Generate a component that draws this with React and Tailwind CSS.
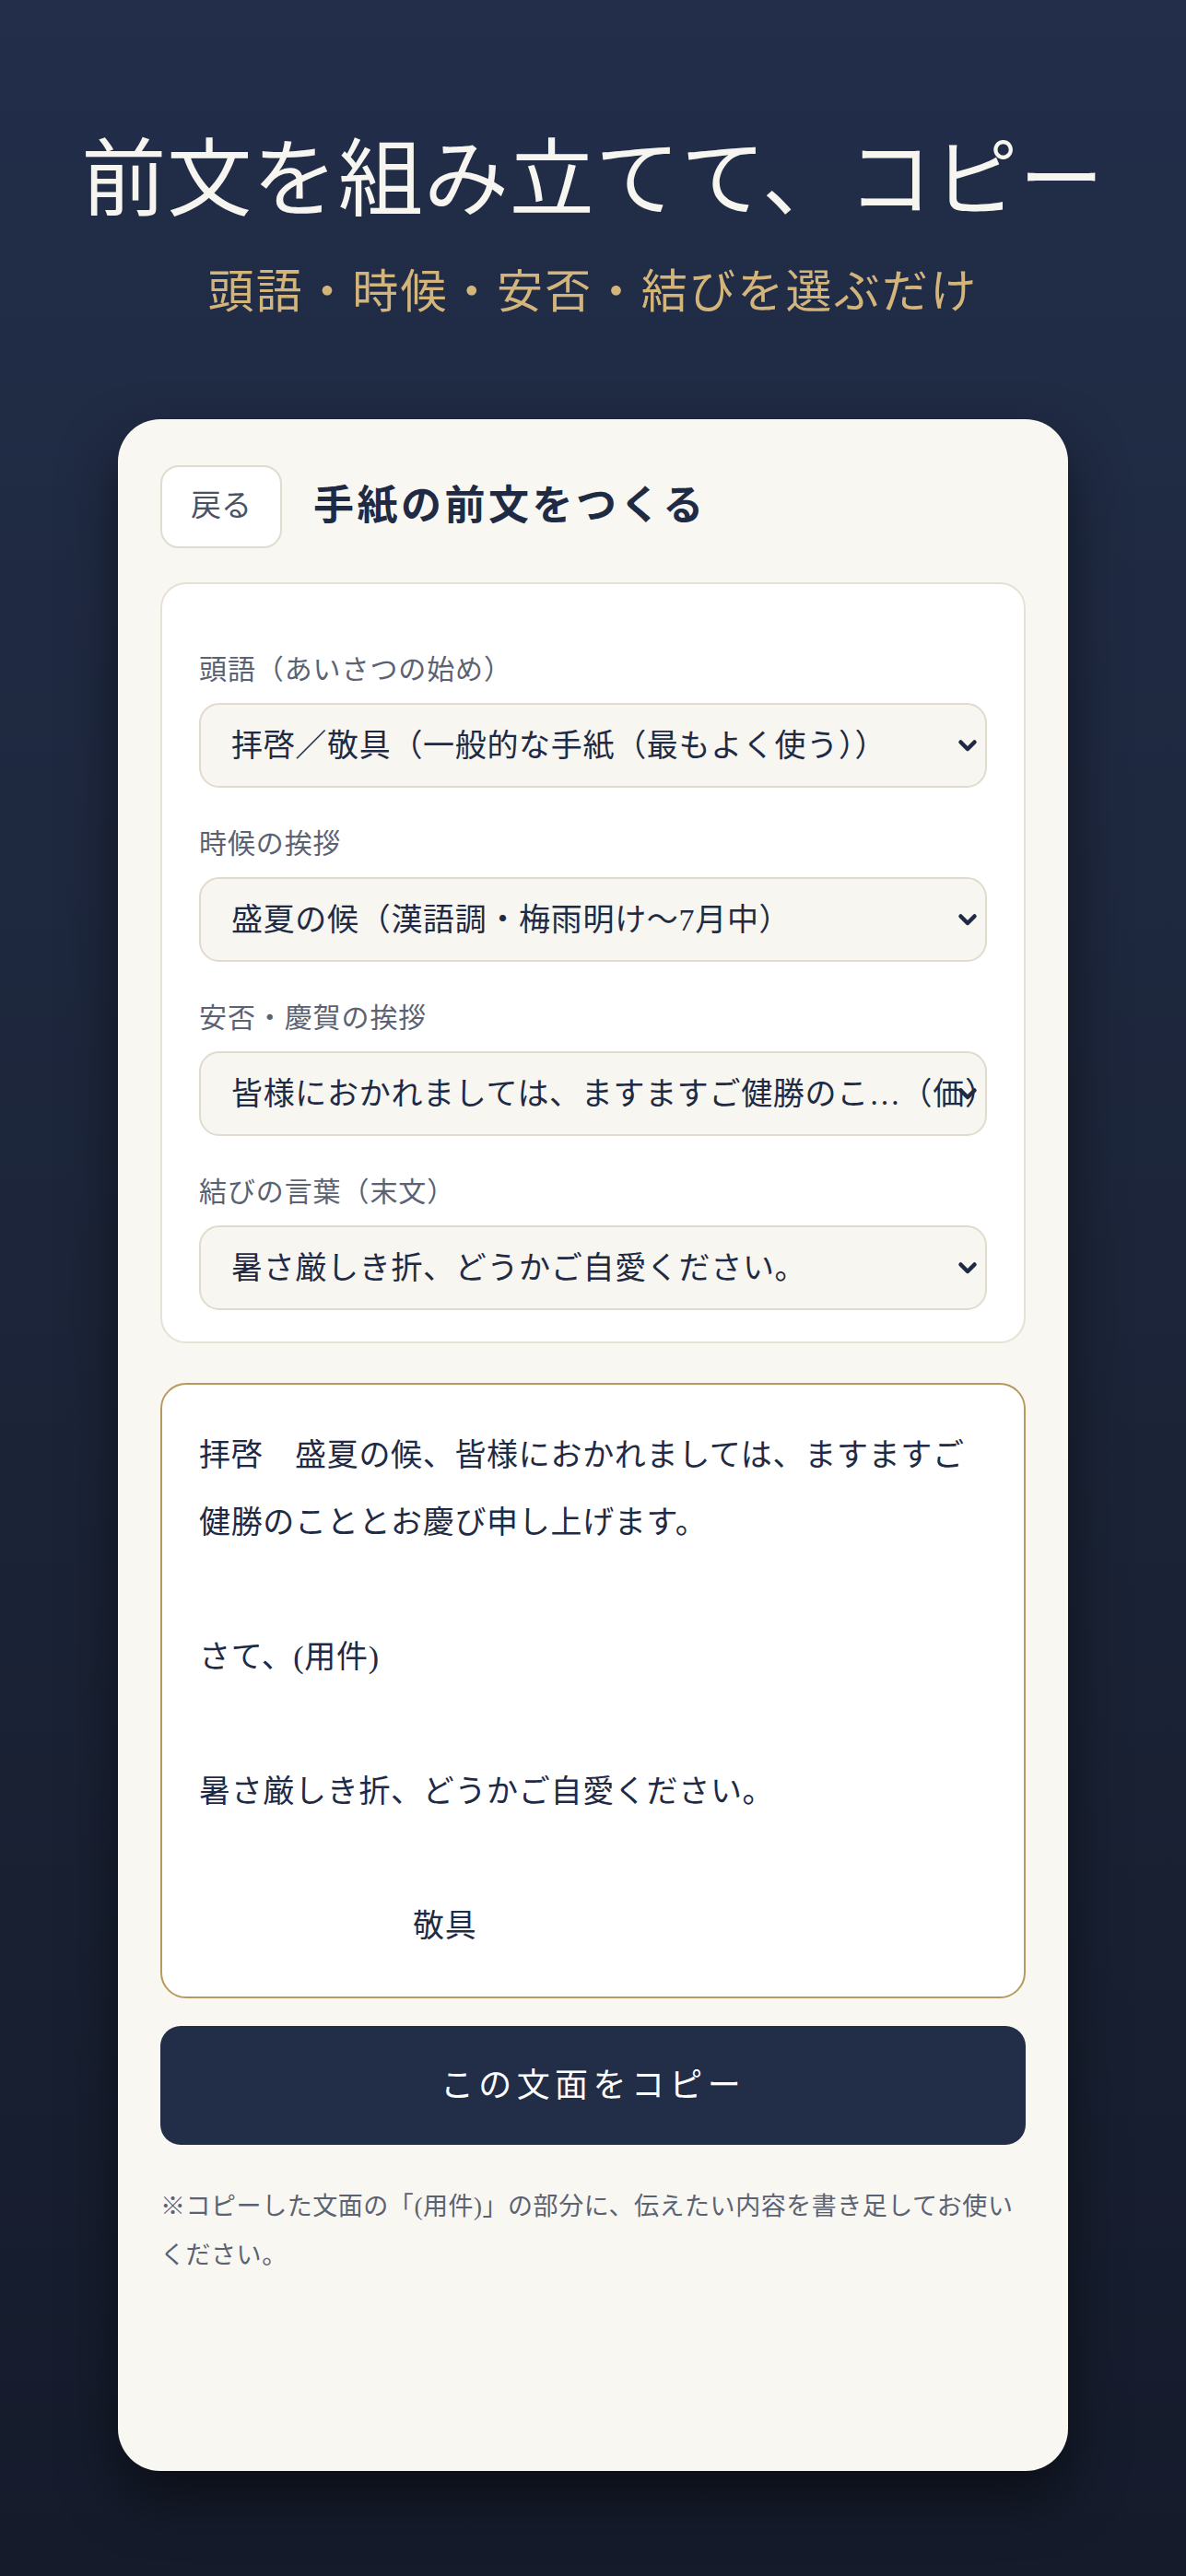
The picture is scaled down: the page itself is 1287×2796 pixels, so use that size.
import React from 'react';

const FONT = { fontFamily: '"Liberation Serif", "Noto Sans CJK JP", serif' };

const fields = [
  { label: '頭語（あいさつの始め）', value: '拝啓／敬具（一般的な手紙（最もよく使う））' },
  { label: '時候の挨拶', value: '盛夏の候（漢語調・梅雨明け〜7月中）' },
  { label: '安否・慶賀の挨拶', value: '皆様におかれましては、ますますご健勝のこ…（価）' },
  { label: '結びの言葉（末文）', value: '暑さ厳しき折、どうかご自愛ください。' },
];

const letterLines = [
  '拝啓　盛夏の候、皆様におかれましては、ますますご健勝のこととお慶び申し上げます。',
  '',
  'さて、(用件)',
  '',
  '暑さ厳しき折、どうかご自愛ください。',
  '',
];

function Chevron() {
  return (
    <svg width="22" height="16" viewBox="0 0 22 16" fill="none" className="pointer-events-none absolute right-[10px] top-1/2 -translate-y-1/2">
      <path d="M3.5 4.5l7.5 7.5 7.5-7.5" stroke="#1f2a44" strokeWidth="4.5" strokeLinecap="round" strokeLinejoin="round" />
    </svg>
  );
}

// セレクト1つ分（ラベル + 選択肢）
function Field({ label, value }) {
  return (
    <div className="flex flex-col">
      <label className="mb-[14px] text-[30px] leading-[45px] tracking-[0.03em] text-[#5b6272]">{label}</label>
      <div className="relative">
        <select
          defaultValue={value}
          style={FONT}
          className="h-[92px] w-full appearance-none overflow-hidden rounded-[22px] border-2 border-[#e0dbcd] bg-[#f7f6f1] pl-[33px] pr-[10px] text-[34px] tracking-[0.02em] text-[#1f2a44] outline-none"
        >
          <option value={value}>{value}</option>
        </select>
        <Chevron />
      </div>
    </div>
  );
}

export default function App() {
  return (
    <div style={FONT} className="min-h-[2796px] bg-gradient-to-b from-[#222e4a] via-[#1c2539] to-[#151b2b] pb-[113px]">
      {/* ヒーロー見出し */}
      <div className="pt-[141px] text-center">
        <h1 className="text-[92px] font-normal leading-[110px] tracking-[0.01em] text-[#f7f5ef]">前文を組み立てて、コピー</h1>
        <p className="mt-[36px] text-[50px] leading-[60px] tracking-[0.045em] text-[#d3b57b]">頭語・時候・安否・結びを選ぶだけ</p>
      </div>

      <div className="mx-auto mt-[108px] w-[1031px] rounded-[46px] bg-[#f8f7f2] px-[46px] pt-[50px] pb-[207px] shadow-[0_28px_60px_rgba(0,0,0,0.5)]">
        <div className="flex items-center gap-[34px]">
          <button className="h-[90px] w-[132px] rounded-[20px] border-2 border-[#e0dccf] bg-white text-[33px] text-[#4b5263]">
            戻る
          </button>
          <h2 className="text-[44px] font-semibold tracking-[0.08em] text-[#1f2a44]">手紙の前文をつくる</h2>
        </div>

        <div className="mt-[37px] flex flex-col gap-[38px] rounded-[28px] border-2 border-[#e6e1d5] bg-white px-[40px] pt-[70px] pb-[34px]">
          {fields.map((f) => (
            <Field key={f.label} label={f.label} value={f.value} />
          ))}
        </div>

        {/* 組み立て結果 */}
        <div className="mt-[43px] rounded-[28px] border-2 border-[#b89a5e] bg-white p-[40px] text-[34px] leading-[73px] tracking-[0.02em] text-[#1f2a44]">
          {letterLines.map((line, i) => (
            <div key={i} className="min-h-[73px]">{line}</div>
          ))}
          <div className="pl-[232px]">敬具</div>
        </div>

        <button className="mt-[30px] h-[129px] w-full rounded-[22px] bg-[#222d48] text-[36px] tracking-[0.15em] text-white">
          この文面をコピー
        </button>

        <p className="mt-[41px] text-[27px] leading-[53px] tracking-[0.02em] text-[#5b6272]">
          ※コピーした文面の「(用件)」の部分に、伝えたい内容を書き足してお使いください。
        </p>
      </div>
    </div>
  );
}
